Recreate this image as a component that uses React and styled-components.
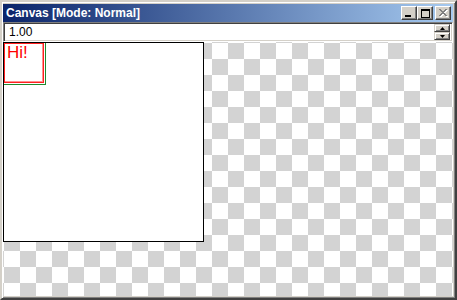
import React from "react";
import styled, { createGlobalStyle } from "styled-components";

const GlobalStyle = createGlobalStyle`
  html, body {
    margin: 0;
    padding: 0;
    background: #d4d0c8;
  }
`;

const Window = styled.div`
  box-sizing: border-box;
  width: 457px;
  height: 300px;
  display: flex;
  flex-direction: column;
  background: #d4d0c8;
  padding: 2px 2px 2px 1px;
  border: 2px solid;
  border-color: #d4d0c8 #404040 #404040 #d4d0c8;
  box-shadow: inset 1px 1px 0 #ffffff, inset -1px -1px 0 #808080;
  font-family: "Liberation Sans", Arial, sans-serif;
`;

const TitleBar = styled.div`
  height: 18px;
  flex: none;
  display: flex;
  align-items: center;
  padding: 0 2px 0 3px;
  background: linear-gradient(to right, #0a246a, #a6caf0);
`;

const Title = styled.span`
  flex: 1;
  color: #ffffff;
  font-weight: bold;
  font-size: 12px;
  white-space: nowrap;
`;

const CaptionButton = styled.button`
  box-sizing: border-box;
  width: 16px;
  height: 14px;
  padding: 0;
  margin: 0 0 0 ${(p) => (p.$gap ? "2px" : "0")};
  display: flex;
  align-items: center;
  justify-content: center;
  background: #d4d0c8;
  border: 1px solid;
  border-color: #ffffff #404040 #404040 #ffffff;
  box-shadow: inset -1px -1px 0 #808080;
`;

const Toolbar = styled.div`
  height: 20px;
  flex: none;
  box-sizing: border-box;
  display: flex;
  align-items: center;
  background: #ffffff;
  border: 1px solid;
  border-color: #808080 #ffffff #ffffff #808080;
  box-shadow: inset 1px 1px 0 #404040, inset -1px -1px 0 #d4d0c8;
  padding: 0 2px 0 5px;
`;

const ValueText = styled.span`
  flex: 1;
  font-size: 12px;
  color: #000000;
`;

const Spin = styled.div`
  width: 16px;
  height: 16px;
  display: flex;
  flex-direction: column;
`;

const SpinButton = styled.div`
  box-sizing: border-box;
  flex: 1;
  display: flex;
  align-items: center;
  justify-content: center;
  background: #d4d0c8;
  border: 1px solid;
  border-color: #d4d0c8 #404040 #404040 #d4d0c8;
  box-shadow: inset 1px 1px 0 #ffffff, inset -1px -1px 0 #808080;
`;

const Canvas = styled.div`
  flex: 1;
  overflow: hidden;
  background: repeating-conic-gradient(#ffffff 0 25%, #d3d3d3 0 50%) 1px 1px / 32px 32px;
`;

const Page = styled.div`
  box-sizing: border-box;
  width: 201px;
  height: 200px;
  background: #ffffff;
  border: 1px solid #000000;
`;

const Selection = styled.div`
  width: 41px;
  height: 41px;
  border-right: 1px solid #1e8a2e;
  border-bottom: 1px solid #1e8a2e;
`;

const Box = styled.div`
  box-sizing: border-box;
  width: 40px;
  height: 40px;
  border: 1px solid #ff2020;
  box-shadow: inset -1px -1px 0 #ff9090;
  color: #ff0000;
  font-size: 17px;
  line-height: 16px;
  padding: 1px 0 0 2px;
`;

const Minimize = () => (
  <svg width="8" height="8" viewBox="0 0 8 8">
    <rect x="0" y="6" width="6" height="2" fill="#000" />
  </svg>
);

const Maximize = () => (
  <svg width="9" height="9" viewBox="0 0 9 9">
    <rect x="0.5" y="0.5" width="8" height="8" fill="none" stroke="#000" />
    <rect x="0" y="1" width="9" height="1" fill="#000" />
  </svg>
);

const Close = () => (
  <svg width="9" height="8" viewBox="0 0 9 8">
    <path d="M1 1 L8 8 M8 1 L1 8 M2 1 L9 8 M9 1 L2 8" stroke="#ffffff" strokeWidth="1" />
    <path d="M0 0 L7 7 M7 0 L0 7 M1 0 L8 7 M8 0 L1 7" stroke="#808080" strokeWidth="1" />
  </svg>
);

const Arrow = ({ down }) => (
  <svg width="5" height="3" viewBox="0 0 5 3">
    <path d={down ? "M0 0 H5 L2.5 3 Z" : "M0 3 H5 L2.5 0 Z"} fill="#000" />
  </svg>
);

export default function App() {
  return (
    <>
      <GlobalStyle />
      <Window>
        <TitleBar>
          <Title>Canvas [Mode: Normal]</Title>
          <CaptionButton>
            <Minimize />
          </CaptionButton>
          <CaptionButton>
            <Maximize />
          </CaptionButton>
          <CaptionButton $gap>
            <Close />
          </CaptionButton>
        </TitleBar>
        <Toolbar>
          <ValueText>1.00</ValueText>
          <Spin>
            <SpinButton>
              <Arrow />
            </SpinButton>
            <SpinButton>
              <Arrow down />
            </SpinButton>
          </Spin>
        </Toolbar>
        <Canvas>
          <Page>
            <Selection>
              <Box>Hi!</Box>
            </Selection>
          </Page>
        </Canvas>
      </Window>
    </>
  );
}
